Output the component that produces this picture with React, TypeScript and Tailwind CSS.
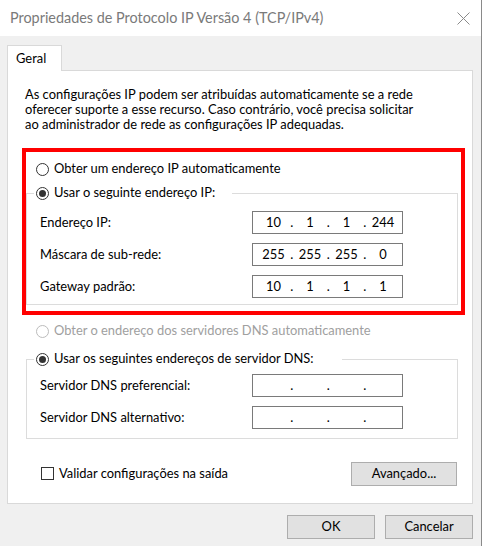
import { Fragment } from "react";

function Radio({ checked, disabled }: { checked?: boolean; disabled?: boolean }) {
  return (
    <span
      className={
        disabled
          ? "flex h-[13px] w-[13px] shrink-0 items-center justify-center rounded-full border border-[#bcbcbc] bg-white"
          : "flex h-[13px] w-[13px] shrink-0 items-center justify-center rounded-full border border-[#333333] bg-white"
      }
    >
      {checked && <span className="h-[7px] w-[7px] rounded-full bg-[#333333]" />}
    </span>
  );
}

function IpBox({ parts }: { parts: string[] }) {
  return (
    <div className="flex h-[23px] w-[151px] items-center border border-[#7a7a7a] bg-white pl-[4px] text-black">
      {parts.map((p, i) => (
        <Fragment key={i}>
          {i > 0 && <span className="flex w-[3.5px] justify-center">.</span>}
          <span className="w-[33px] text-center">{p}</span>
        </Fragment>
      ))}
    </div>
  );
}

function Field({ label, parts }: { label: string; parts: string[] }) {
  return (
    <div className="flex h-[23px] items-center pl-[13px]">
      <span className="w-[212px]">{label}</span>
      <IpBox parts={parts} />
    </div>
  );
}

function Button({ children, className = "" }: { children: string; className?: string }) {
  return (
    <button className={`flex h-[24px] items-center justify-center border border-[#adadad] bg-[#e1e1e1] text-black ${className}`}>
      {children}
    </button>
  );
}

export default function App() {
  const empty = ["", "", "", ""];
  return (
    <div className="flex h-[546px] w-[483px] bg-white font-['Segoe_UI',Lato,'Liberation_Sans',sans-serif] text-[12.9px] text-black">
      <div className="flex w-[481px] flex-col">
        {/* title bar */}
        <div className="flex h-[36px] shrink-0 items-center justify-between bg-white pl-[10px] pr-[11px]">
          <span className="text-[14.4px] text-[#7a7a7a]">Propriedades de Protocolo IP Versão 4 (TCP/IPv4)</span>
          <svg width="13" height="13" viewBox="0 0 13 13" stroke="#8a8a8a" strokeWidth="1">
            <path d="M0.5 0.5 L12.5 12.5 M12.5 0.5 L0.5 12.5" />
          </svg>
        </div>

        <div className="flex flex-1 flex-col bg-[#f0f0f0] pl-[7px] pt-[9px]">
          <div className="relative z-10 -mb-px flex h-[26px] w-[55px] border border-b-0 border-[#d9d9d9] bg-white pl-[8px] pt-[3px]">
            Geral
          </div>

          <div className="flex h-[434px] w-[466px] flex-col border border-[#d9d9d9] bg-white">
            <div className="pl-[17px] pt-[16px] leading-[15px]">
              <p className="whitespace-nowrap">As configurações IP podem ser atribuídas automaticamente se a rede</p>
              <p className="whitespace-nowrap">oferecer suporte a esse recurso. Caso contrário, você precisa solicitar</p>
              <p className="whitespace-nowrap">ao administrador de rede as configurações IP adequadas.</p>
            </div>

            {/* highlighted IP block */}
            <div className="ml-[14px] mt-[16px] flex h-[167px] w-[443px] flex-col border-4 border-[#ff0000]">
              <div className="mt-[9px] flex h-[16px] items-center gap-[5px] pl-[10px]">
                <Radio />
                <span>Obter um endereço IP automaticamente</span>
              </div>
              <fieldset className="mt-[8px] w-[432px] border border-[#dcdcdc] pb-[6px] pt-[10px]">
                <legend className="ml-[7px] flex h-[16px] items-center gap-[5px] pl-[2px] pr-[17px]">
                  <Radio checked />
                  <span>Usar o seguinte endereço IP:</span>
                </legend>
                <div className="flex flex-col gap-[9px]">
                  <Field label="Endereço IP:" parts={["10", "1", "1", "244"]} />
                  <Field label="Máscara de sub-rede:" parts={["255", "255", "255", "0"]} />
                  <Field label="Gateway padrão:" parts={["10", "1", "1", "1"]} />
                </div>
              </fieldset>
            </div>

            <div className="mt-[8px] flex h-[16px] items-center gap-[5px] pl-[28px] text-[#a0a0a0]">
              <Radio disabled />
              <span>Obter o endereço dos servidores DNS automaticamente</span>
            </div>

            <fieldset className="ml-[18px] mt-[12px] w-[432px] border border-[#dcdcdc] pb-[9px] pt-[7px]">
              <legend className="ml-[7px] flex h-[16px] items-center gap-[5px] pl-[2px] pr-[28px]">
                <Radio checked />
                <span>Usar os seguintes endereços de servidor DNS:</span>
              </legend>
              <div className="flex flex-col gap-[9px]">
                <Field label="Servidor DNS preferencial:" parts={empty} />
                <Field label="Servidor DNS alternativo:" parts={empty} />
              </div>
            </fieldset>

            <div className="mt-[23px] flex h-[24px] items-center justify-between pl-[33px] pr-[15px]">
              <label className="flex items-center gap-[5px]">
                <span className="h-[13px] w-[13px] border border-[#333333] bg-white" />
                <span>Validar configurações na saída</span>
              </label>
              <Button className="w-[106px]">Avançado...</Button>
            </div>
          </div>

          <div className="mt-[11px] flex justify-end gap-[10px] pr-[8px]">
            <Button className="w-[88px]">OK</Button>
            <Button className="w-[88px]">Cancelar</Button>
          </div>
        </div>
      </div>
      <div className="w-px bg-[#8a8a8a]" />
      <div className="w-px bg-white" />
    </div>
  );
}
